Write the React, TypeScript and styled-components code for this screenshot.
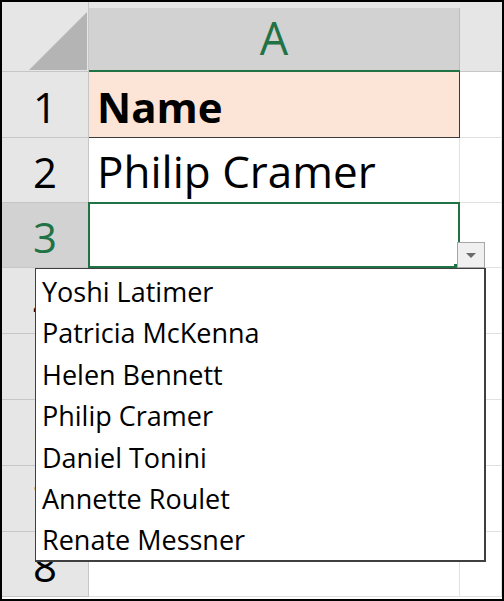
import React from 'react';
import styled, { createGlobalStyle } from 'styled-components';

const GlobalStyle = createGlobalStyle`
  html, body { margin: 0; padding: 0; background: #fff; }
  * { box-sizing: border-box; }
`;

const GREEN = '#217346';

const Frame = styled.div`
  width: 504px;
  height: 601px;
  border: 2px solid #000;
  overflow: hidden;
  background: #fff;
`;

const Sheet = styled.div`
  position: relative;
  display: grid;
  grid-template-columns: 87px 371px 1fr;
  grid-template-rows: 70px 66px 65px 65px 66px 66px 66px 66px 65px;
  font-family: 'Open Sans', 'Noto Sans', sans-serif;
`;

const Corner = styled.div`
  background: #e6e6e6;
  border-right: 1px solid #c6c6c6;
  border-bottom: 1px solid #c6c6c6;
  display: flex;
  justify-content: flex-end;
  align-items: flex-end;
  padding: 0 1px 1px 0;
`;

const Triangle = styled.div`
  width: 58px;
  height: 58px;
  background: #b4b4b4;
  clip-path: polygon(100% 0, 100% 100%, 0 100%);
`;

const ColHead = styled.div<{ $selected?: boolean }>`
  background: #e6e6e6;
  border-bottom: ${p => (p.$selected ? `2px solid ${GREEN}` : '1px solid #c6c6c6')};
  padding-top: ${p => (p.$selected ? '6px' : '0')};
  display: flex;
  flex-direction: column;
`;

const ColLabel = styled.div`
  flex: 1;
  background: #d2d2d2;
  border-right: 1px solid #bdbdbd;
  color: ${GREEN};
  font-size: 45px;
  line-height: 1;
  display: flex;
  align-items: center;
  justify-content: center;
  padding-bottom: 4px;
`;

const RowHead = styled.div<{ $selected?: boolean }>`
  background: ${p => (p.$selected ? '#d2d2d2' : '#e6e6e6')};
  color: ${p => (p.$selected ? GREEN : '#000')};
  border-right: 1px solid #c6c6c6;
  border-bottom: 1px solid #c6c6c6;
  font-size: 42px;
  line-height: 1;
  display: flex;
  align-items: flex-end;
  justify-content: center;
  padding-bottom: 9px;
`;

const Cell = styled.div<{ $header?: boolean }>`
  position: relative;
  background: ${p => (p.$header ? '#fce4d6' : '#fff')};
  border-right: 1px solid ${p => (p.$header ? '#3a3a3a' : '#e1e1e1')};
  border-bottom: 1px solid ${p => (p.$header ? '#3a3a3a' : '#e1e1e1')};
  font-size: ${p => (p.$header ? '42px' : '44px')};
  font-weight: ${p => (p.$header ? 700 : 400)};
  line-height: 1;
  display: flex;
  align-items: flex-end;
  padding: 0 0 9px 8px;
  white-space: nowrap;
`;

const Active = styled.div`
  position: absolute;
  left: -1px;
  top: -1px;
  right: -1px;
  bottom: -1px;
  border: 2px solid ${GREEN};
  pointer-events: none;
  z-index: 2;
`;

const Handle = styled.div`
  position: absolute;
  right: -2px;
  bottom: -3px;
  width: 6px;
  height: 5px;
  background: ${GREEN};
`;

const DropButton = styled.div`
  position: absolute;
  left: 455px;
  top: 240px;
  width: 28px;
  height: 26px;
  background: #f0f0f0;
  border: 1px solid #a6a6a6;
  display: flex;
  align-items: center;
  justify-content: center;
  z-index: 3;
`;

const List = styled.ul`
  position: absolute;
  left: 33px;
  top: 266px;
  width: 451px;
  height: 294px;
  margin: 0;
  padding: 2px 0 0 6px;
  list-style: none;
  background: #fff;
  border: 1px solid #3f3f3f;
  border-right-width: 2px;
  border-bottom-width: 2px;
  font-family: 'Open Sans', 'Noto Sans', sans-serif;
  font-size: 27px;
  line-height: 41.4px;
  color: #000;
  z-index: 4;
`;

const Item = styled.li`
  white-space: nowrap;
`;

const names = [
  'Yoshi Latimer',
  'Patricia McKenna',
  'Helen Bennett',
  'Philip Cramer',
  'Daniel Tonini',
  'Annette Roulet',
  'Renate Messner',
];

const rows: { n: number; text?: string; header?: boolean }[] = [
  { n: 1, text: 'Name', header: true },
  { n: 2, text: 'Philip Cramer' },
  { n: 3 },
  { n: 4 },
  { n: 5 },
  { n: 6 },
  { n: 7 },
  { n: 8 },
];

export default function App() {
  return (
    <>
      <GlobalStyle />
      <Frame>
        <Sheet>
          <Corner>
            <Triangle />
          </Corner>
          <ColHead $selected>
            <ColLabel>A</ColLabel>
          </ColHead>
          <ColHead />
          {rows.map(r => (
            <React.Fragment key={r.n}>
              <RowHead $selected={r.n === 3}>{r.n}</RowHead>
              <Cell $header={r.header}>
                {r.text}
                {r.n === 3 && (
                  <Active>
                    <Handle />
                  </Active>
                )}
              </Cell>
              <Cell />
            </React.Fragment>
          ))}
          <DropButton>
            <svg width="10" height="5" viewBox="0 0 10 5">
              <path d="M0 0 H10 L5 5 Z" fill="#6b6b6b" />
            </svg>
          </DropButton>
          <List>
            {names.map(n => (
              <Item key={n}>{n}</Item>
            ))}
          </List>
        </Sheet>
      </Frame>
    </>
  );
}
